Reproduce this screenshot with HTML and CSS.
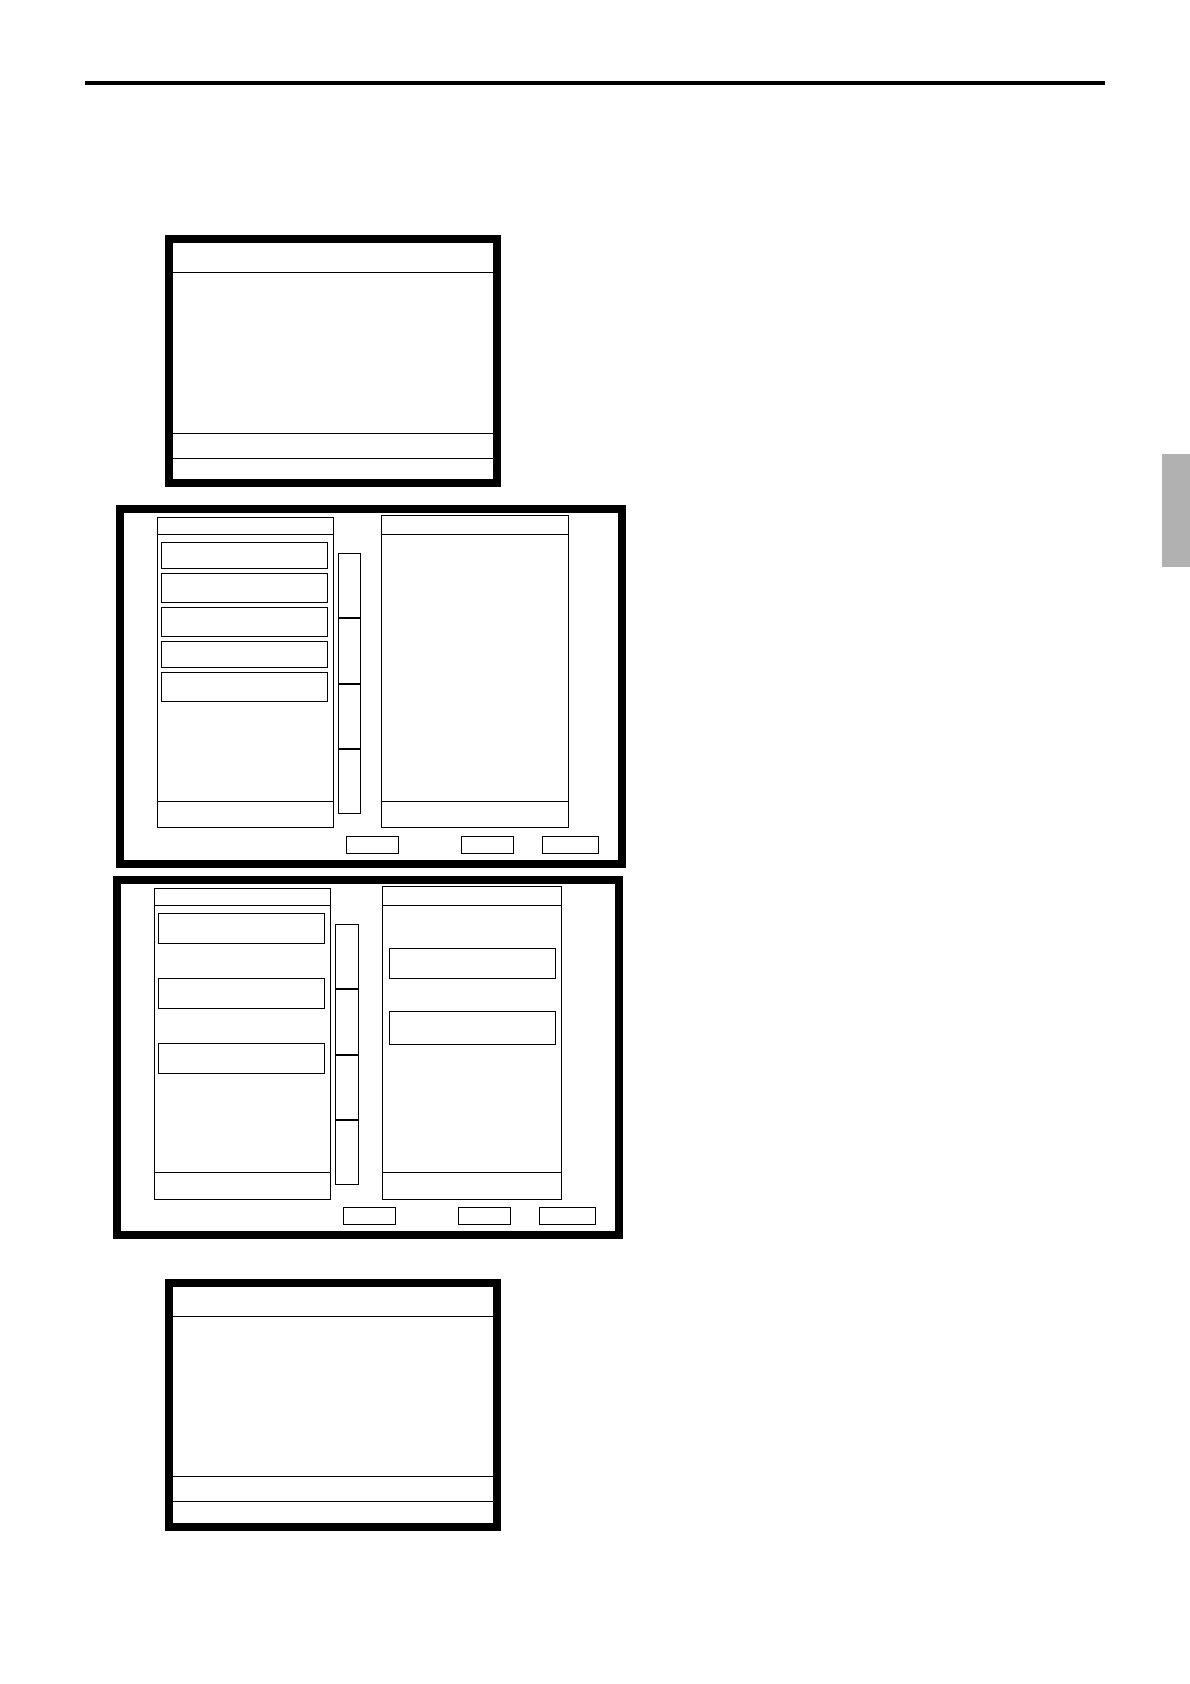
FILE: index.html
```html
<!DOCTYPE html>
<html lang="en">
<head>
    <meta charset="UTF-8">
    <meta name="viewport" content="width=device-width, initial-scale=1.0">
    <title>Screens</title>
    <link rel="stylesheet" href="styles.css">
</head>
<body>
    <main>
        <hr class="rule">

        <section class="screen screen-first">
            <div class="screen-title"></div>
            <div class="screen-body"></div>
            <div class="screen-message"></div>
            <div class="screen-status"></div>
        </section>

        <section class="editor">
            <div class="columns">
                <div class="list">
                    <div class="list-head"></div>
                    <div class="list-body">
                        <div class="item item-short"></div>
                        <div class="item"></div>
                        <div class="item"></div>
                        <div class="item item-short"></div>
                        <div class="item"></div>
                    </div>
                    <div class="list-foot"></div>
                </div>
                <div class="strip">
                    <button type="button" aria-label="Move 1"></button>
                    <button type="button" aria-label="Move 2"></button>
                    <button type="button" aria-label="Move 3"></button>
                    <button type="button" aria-label="Move 4"></button>
                </div>
                <div class="list list-target">
                    <div class="list-head"></div>
                    <div class="list-body"></div>
                    <div class="list-foot"></div>
                </div>
            </div>
            <div class="actions">
                <button type="button" class="action-first" aria-label="Action 1"></button>
                <button type="button" aria-label="Action 2"></button>
                <button type="button" class="action-last" aria-label="Action 3"></button>
            </div>
        </section>

        <section class="editor editor-moved">
            <div class="columns">
                <div class="list">
                    <div class="list-head"></div>
                    <div class="list-body list-spread">
                        <div class="item"></div>
                        <div class="item"></div>
                        <div class="item"></div>
                    </div>
                    <div class="list-foot"></div>
                </div>
                <div class="strip">
                    <button type="button" aria-label="Move 1"></button>
                    <button type="button" aria-label="Move 2"></button>
                    <button type="button" aria-label="Move 3"></button>
                    <button type="button" aria-label="Move 4"></button>
                </div>
                <div class="list list-target">
                    <div class="list-head"></div>
                    <div class="list-body list-spread">
                        <div class="item"></div>
                        <div class="item item-tall"></div>
                    </div>
                    <div class="list-foot"></div>
                </div>
            </div>
            <div class="actions">
                <button type="button" class="action-first" aria-label="Action 1"></button>
                <button type="button" aria-label="Action 2"></button>
                <button type="button" class="action-last" aria-label="Action 3"></button>
            </div>
        </section>

        <section class="screen screen-last">
            <div class="screen-title"></div>
            <div class="screen-body"></div>
            <div class="screen-message"></div>
            <div class="screen-status"></div>
        </section>
    </main>

    <aside class="side-tab"></aside>
</body>
</html>
```
FILE: styles.css
```css
* {
    box-sizing: border-box;
}

body {
    display: flex;
    align-items: flex-start;
    margin: 0;
    background: white;
    font-family: "Liberation Sans", Arial, sans-serif;
}

main {
    flex: 1;
    padding: 81px 57px 40px 85px;
}

.rule {
    height: 4px;
    margin: 0;
    border: none;
    background: black;
}

.side-tab {
    width: 28px;
    height: 113px;
    margin-top: 454px;
    background: #b1b1b1;
}

button {
    padding: 0;
    border: 1px solid black;
    border-radius: 0;
    background: white;
    cursor: pointer;
}

/* small screens */
.screen {
    width: 336px;
    margin-left: 80px;
    border: 8px solid black;
}

.screen-first {
    margin-top: 150px;
}

.screen-last {
    margin-top: 40px;
}

.screen-title {
    height: 30px;
    border-bottom: 1px solid black;
}

.screen-body {
    height: 161px;
    border-bottom: 1px solid black;
}

.screen-message {
    height: 25px;
    border-bottom: 1px solid black;
}

.screen-status {
    height: 20px;
}

.screen-last .screen-body {
    height: 160px;
}

.screen-last .screen-status {
    height: 21px;
}

/* two-list editors */
.editor {
    display: flex;
    flex-direction: column;
    justify-content: space-between;
    width: 510px;
    min-height: 363px;
    margin-top: 18px;
    margin-left: 31px;
    padding: 2px 0 6px 33px;
    border: 8px solid black;
}

.editor-moved {
    margin-top: 8px;
    margin-left: 28px;
}

.columns {
    display: flex;
    align-items: flex-end;
}

.list {
    width: 177px;
    border: 1px solid black;
}

.list-target {
    width: 188px;
    margin-left: 20px;
}

.list-head {
    height: 16px;
}

.list-target .list-head {
    height: 18px;
}

.list-body {
    display: flex;
    flex-direction: column;
    gap: 4px;
    height: 268px;
    padding: 7px 5px 0 3px;
    border-top: 1px solid black;
    border-bottom: 1px solid black;
}

.list-foot {
    height: 25px;
}

.item {
    height: 30px;
    border: 1px solid black;
}

.item-short {
    height: 27px;
}

.item-tall {
    height: 34px;
}

.strip {
    display: flex;
    flex-direction: column;
    width: 23px;
    height: 261px;
    margin-left: 4px;
    margin-bottom: 14px;
}

.strip button {
    flex: 1;
}

.editor-moved .strip {
    width: 24px;
    margin-bottom: 15px;
}

.editor-moved .list-target {
    width: 180px;
    margin-left: 23px;
}

.editor-moved .list-target .list-body {
    padding: 42px 5px 0 6px;
}

.editor-moved .list-foot {
    height: 26px;
}

.list-spread {
    gap: 34px;
}

.list-target .list-spread {
    gap: 32px;
}

.list-spread .item {
    height: 31px;
}

.list-spread .item-tall {
    height: 34px;
}

.actions {
    display: flex;
    padding-left: 189px;
}

.actions button {
    width: 53px;
    height: 18px;
}

.actions .action-first {
    margin-right: 62px;
}

.actions .action-last {
    width: 57px;
    margin-left: 28px;
}
```
